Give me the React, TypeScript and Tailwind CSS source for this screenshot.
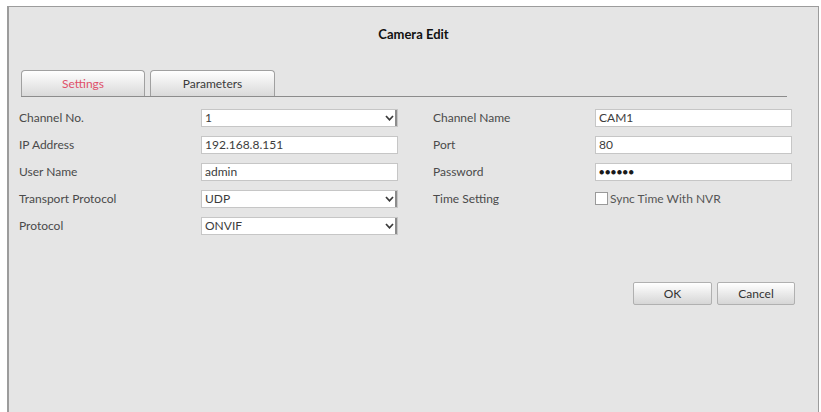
import { useState } from "react";

function Chevron() {
  return (
    <svg width="9" height="6" viewBox="0 0 9 6" className="block">
      <path d="M1 1 L4.5 4.8 L8 1" fill="none" stroke="#3a3a3a" strokeWidth="1.7" />
    </svg>
  );
}

function TextBox({ value, secret }: { value: string; secret?: boolean }) {
  return (
    <div className="w-[197px] h-[18px] bg-white border border-[#c6c6c6] flex items-center px-[3px] text-[12px] text-[#3c3c3c]">
      {secret ? <span className="tracking-[0.5px] text-[9px] text-[#1a1a1a]">●●●●●●</span> : value}
    </div>
  );
}

function SelectBox({ value }: { value: string }) {
  return (
    <div className="w-[197px] h-[18px] bg-white border border-[#c6c6c6] flex items-center text-[12px] text-[#3c3c3c]">
      <span className="flex-1 px-[3px]">{value}</span>
      <span className="w-[14px] h-full flex items-center justify-center border-r-2 border-[#8c8c8c]">
        <Chevron />
      </span>
    </div>
  );
}

function Label({ text, w }: { text: string; w: string }) {
  return <div className={`${w} text-[12px] text-[#4a4a4a]`}>{text}</div>;
}

export default function App() {
  const [tab, setTab] = useState("settings");
  const [sync, setSync] = useState(false);

  return (
    <div className="w-[821px] h-[412px] bg-white overflow-hidden font-['Lato',sans-serif]">
      <div className="ml-[7px] mt-[6px] w-[812px] h-[406px] bg-[#e5e5e5] border-l-2 border-t border-r border-[#9c9c9c]">
        <div className="h-[56px] flex items-center justify-center text-[13px] font-bold text-[#111]">Camera Edit</div>

        <div className="mt-[7px] ml-[12px] w-[766px] h-[27px] flex items-end gap-[5px] border-b border-[#8c8c8c]">
          {[
            { id: "settings", label: "Settings", w: "w-[124px]" },
            { id: "params", label: "Parameters", w: "w-[125px]" },
          ].map((t) => (
            <button
              key={t.id}
              onClick={() => setTab(t.id)}
              className={`${t.w} h-[26px] rounded-t-[4px] border border-b-0 border-[#a0a0a0] bg-gradient-to-b from-white to-[#d9d9d9] text-[12px] ${
                tab === t.id ? "text-[#e0506a]" : "text-[#3a3a3a]"
              }`}
            >
              {t.label}
            </button>
          ))}
        </div>

        <div className="mt-[7px] pl-[10px]">
          <div className="h-[27px] flex items-center">
            <Label text="Channel No." w="w-[182px]" />
            <SelectBox value="1" />
            <div className="w-[35px]" />
            <Label text="Channel Name" w="w-[162px]" />
            <TextBox value="CAM1" />
          </div>
          <div className="h-[27px] flex items-center">
            <Label text="IP Address" w="w-[182px]" />
            <TextBox value="192.168.8.151" />
            <div className="w-[35px]" />
            <Label text="Port" w="w-[162px]" />
            <TextBox value="80" />
          </div>
          <div className="h-[27px] flex items-center">
            <Label text="User Name" w="w-[182px]" />
            <TextBox value="admin" />
            <div className="w-[35px]" />
            <Label text="Password" w="w-[162px]" />
            <TextBox value="" secret />
          </div>
          <div className="h-[27px] flex items-center">
            <Label text="Transport Protocol" w="w-[182px]" />
            <SelectBox value="UDP" />
            <div className="w-[35px]" />
            <Label text="Time Setting" w="w-[162px]" />
            <label className="flex items-center gap-[2px] text-[12px] text-[#555] cursor-pointer" onClick={() => setSync(!sync)}>
              <span className="w-[13px] h-[13px] bg-white border border-[#9a9a9a] flex items-center justify-center text-[9px]">
                {sync ? "✓" : ""}
              </span>
              Sync Time With NVR
            </label>
          </div>
          <div className="h-[27px] flex items-center">
            <Label text="Protocol" w="w-[182px]" />
            <SelectBox value="ONVIF" />
          </div>
        </div>

        <div className="mt-[43px] pr-[23px] flex justify-end gap-[5px]">
          <button className="w-[79px] h-[23px] rounded-[2px] border border-[#b0b0b0] bg-gradient-to-b from-white to-[#d6d6d6] text-[12px] text-[#333]">
            OK
          </button>
          <button className="w-[78px] h-[23px] rounded-[2px] border border-[#b0b0b0] bg-gradient-to-b from-white to-[#d6d6d6] text-[12px] text-[#333]">
            Cancel
          </button>
        </div>
      </div>
    </div>
  );
}
